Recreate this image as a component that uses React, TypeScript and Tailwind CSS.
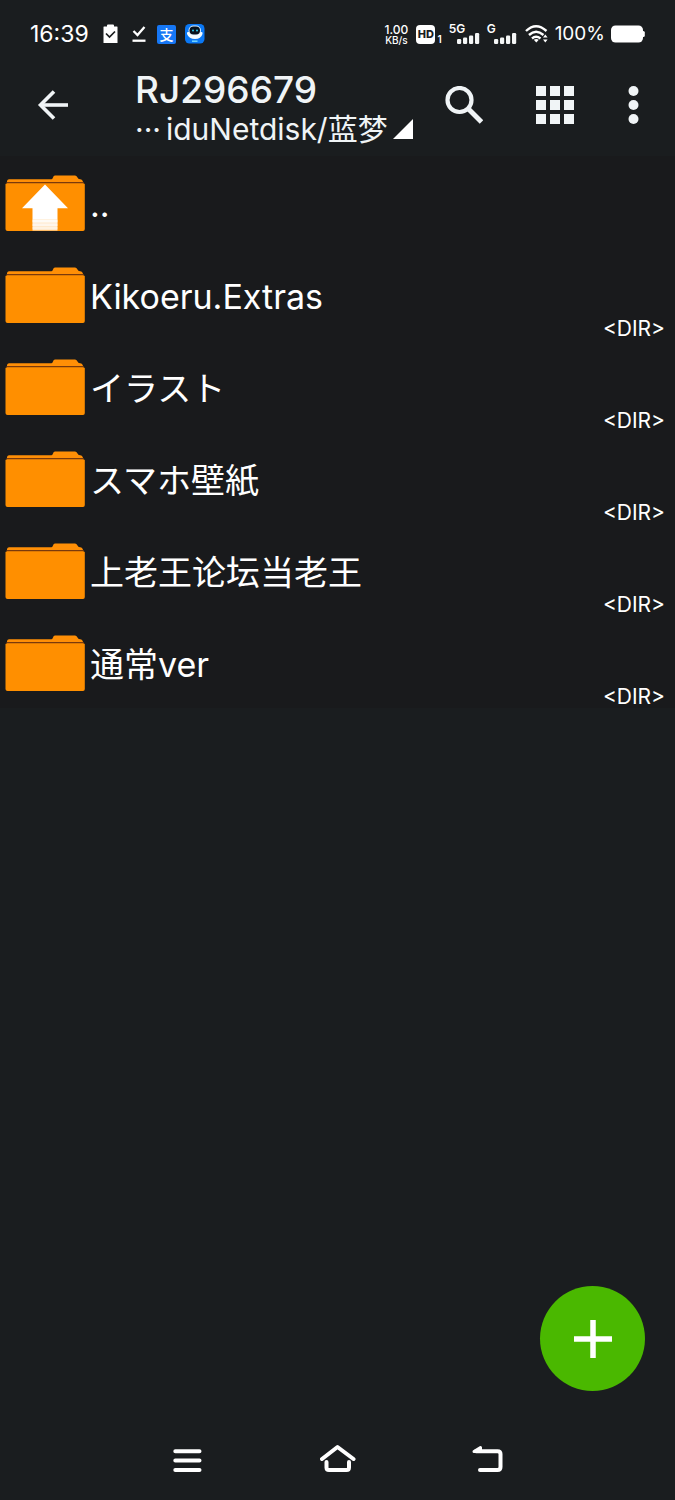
import { clsx } from "clsx";

const entries = [
  { id: "up", name: "..", up: true, lang: "en" },
  { id: "extras", name: "Kikoeru.Extras", lang: "en" },
  { id: "illust", name: "イラスト", lang: "ja" },
  { id: "wallpaper", name: "スマホ壁紙", lang: "ja" },
  { id: "forum", name: "上老王论坛当老王", lang: "zh" },
  { id: "normal", name: "通常ver", lang: "zh" },
];

function FolderIcon({ up }: { up?: boolean }) {
  return (
    <svg width="80" height="62" viewBox="0 -4 80 62" className="shrink-0">
      <path d="M2 9V6Q2.500 4.300 4 4.300H46.500Q47.500 4.300 48 2.500Q48.500 .5 50 .5H70Q71.500 .5 72.500 2.500Q73 4.300 75 4.300Q78 4.300 78.500 9Z" fill="#ff8f06" />
      <rect x="1.500" y="7" width="77" height="1.500" fill="#7a3a0c" />
      <path d="M.5 9.500Q.5 8.500 1.500 8.500H78.500Q79.800 8.500 79.800 9.500V54Q79.800 56 78 56H2.500Q.5 56 .5 54Z" fill="#ff8f00" />
      {up && (
        <g fill="#fff">
          <path d="M40 9.500L63 33.200H52.500V44H27.500V33.200H17Z" />
          <rect x="27.500" y="44" width="25" height="11.500" opacity=".8" />
          <rect x="27.500" y="44.500" width="25" height="3" opacity=".8" />
          <rect x="27.500" y="48.500" width="25" height="2.500" opacity=".6" />
          <rect x="27.500" y="52" width="25" height="2" opacity=".4" />
        </g>
      )}
    </svg>
  );
}

function SignalBars() {
  return (
    <svg width="23" height="12" viewBox="0 0 23 12" fill="#f4f6f6">
      <rect x="0" y="7" width="4.200" height="5" rx="1.200" />
      <rect x="6" y="5.500" width="4.200" height="6.500" rx="1.200" />
      <rect x="12" y="3.500" width="4.200" height="8.500" rx="1.200" />
      <rect x="18" y="1" width="4.200" height="11" rx="1.200" />
    </svg>
  );
}

function StatusBar() {
  return (
    <div className="flex h-[68px] items-center justify-between px-[30px]">
      <div className="flex items-center">
        <span className="w-[73px] text-[23px] leading-7">16:39</span>
        <svg width="15" height="20" viewBox="0 0 15 20" className="mr-[13px]">
          <path d="M1 2.500H4V1.500Q4 .5 5 .5H10Q11 .5 11 1.500V2.500H14Q14.500 2.500 14.500 3V19H.5V3Q.5 2.500 1 2.500Z" fill="#fff" />
          <path d="M3 9.500L6.500 13L12 7.500" fill="none" stroke="#1a1d1f" strokeWidth="1.700" />
        </svg>
        <svg width="15" height="20" viewBox="0 0 15 20" fill="none" stroke="#fff" strokeWidth="2.300" className="mr-[11px]">
          <path d="M2.500 7L6.500 11L13.500 3" />
          <path d="M1.500 16.700H14.500" />
        </svg>
        <span className="mr-[9px] flex size-[19px] items-center justify-center rounded-[2px] bg-[#1677f5] font-['Noto_Sans_CJK_SC',sans-serif] text-[14px] leading-none font-medium">
          支
        </span>
        <svg width="20" height="20" viewBox="0 0 20 20">
          <rect width="19.500" height="19.500" rx="4.500" fill="#0a78f5" />
          <path d="M3 8Q1.500 8 2 10Q4 15 10 15Q16 15 17.500 10Q18 8 16.500 8Z" fill="#f3fbff" />
          <rect x="3.500" y="1.500" width="12.500" height="10" rx="5" fill="#dff1ff" />
          <rect x="4.500" y="2.500" width="10.500" height="8" rx="4" fill="#06111d" />
          <circle cx="8" cy="6.500" r="1" fill="#28c7ee" />
          <circle cx="12" cy="6.500" r="1" fill="#28c7ee" />
          <path d="M7 17.200H12.500" stroke="#74d7ff" strokeWidth="1.500" />
        </svg>
      </div>

      <div className="flex items-center">
        <div className="mr-2 flex w-6 flex-col items-center font-medium">
          <span className="text-[12px] leading-[11px]">1.00</span>
          <span className="text-[10px] leading-[10px]">KB/s</span>
        </div>
        <div className="mr-[7px] flex items-end gap-[2px]">
          <span className="flex h-[19px] w-[19px] items-center justify-center rounded-[4px] bg-white text-[11px] font-extrabold text-[#1a1d1f]">
            HD
          </span>
          <span className="text-[10px] leading-[10px] font-semibold">1</span>
        </div>
        <div className="mr-[7px] grid h-5 w-[31px]">
          <span className="col-start-1 row-start-1 text-[12px] leading-[10px] font-semibold">5G</span>
          <span className="col-start-1 row-start-1 self-end justify-self-end">
            <SignalBars />
          </span>
        </div>
        <div className="mr-2 grid h-5 w-[30px]">
          <span className="col-start-1 row-start-1 text-[12px] leading-[10px] font-semibold">G</span>
          <span className="col-start-1 row-start-1 self-end justify-self-end">
            <SignalBars />
          </span>
        </div>
        <svg width="24" height="20" viewBox="0 0 24 20" fill="none" stroke="#fff" strokeWidth="2.400" className="mr-[6px]">
          <path d="M1 7Q11 -2.500 21.500 7" />
          <path d="M4 11Q11 4.500 18.500 11" />
          <path d="M7 14.500Q11 11 15.500 14.500" />
          <path d="M11.300 18.500L8.800 15.800Q11.300 14.300 13.800 15.800Z" fill="#fff" stroke="none" />
          <path d="M18 13.500L20.300 10.500L22.600 13.500ZM18 15.500H22.600L20.300 18.500Z" fill="#fff" stroke="none" />
        </svg>
        <span className="mr-[6px] text-[19px] leading-6">100%</span>
        <svg width="34" height="18" viewBox="0 0 34 18" fill="#fff">
          <rect x="0" y=".5" width="32" height="17" rx="4.500" />
          <rect x="30" y="6" width="3.800" height="6" rx="1.500" />
        </svg>
      </div>
    </div>
  );
}

function Toolbar() {
  return (
    <header className="flex h-[88px] items-start pr-[36px] pl-[37px] text-[#f0f4f6]">
      <button type="button" aria-label="Back" className="flex h-[74px] w-[98px] items-center">
        <svg width="32" height="30" viewBox="0 0 32 30" fill="none" stroke="currentColor" strokeWidth="3.600">
          <path d="M31 15H3.500" />
          <path d="M17 1.500L3.500 15L17 28.500" />
        </svg>
      </button>
      <div className="flex flex-1 flex-col pt-[2px]">
        <h1 className="text-[37px] leading-10 font-medium">RJ296679</h1>
        <button type="button" className="flex items-center gap-[5px] text-[30px] leading-[38px] whitespace-nowrap">
          <span>···</span>
          <span>iduNetdisk/蓝梦</span>
          <svg width="20" height="20" viewBox="0 0 20 20" fill="#fff">
            <path d="M20 0V20H0Z" />
          </svg>
        </button>
      </div>
      <div className="flex h-[74px] items-center gap-[53px]">
        <button type="button" aria-label="Search">
          <svg width="38" height="38" viewBox="0 0 38 38" fill="none" stroke="currentColor">
            <circle cx="14.500" cy="14" r="12" strokeWidth="4.200" />
            <path d="M23 22.500L36.500 36" strokeWidth="5" />
          </svg>
        </button>
        <button type="button" aria-label="View mode">
          <svg width="38" height="38" viewBox="0 0 38 38" fill="currentColor">
            {[0, 14, 28].map((y) => [0, 14, 28].map((x) => <rect key={`${x}-${y}`} x={x} y={y} width="10" height="10" />))}
          </svg>
        </button>
        <button type="button" aria-label="More options">
          <svg width="12" height="38" viewBox="0 0 12 38" fill="currentColor">
            <circle cx="6.500" cy="5" r="5" />
            <circle cx="6.500" cy="19" r="5" />
            <circle cx="6.500" cy="33" r="5" />
          </svg>
        </button>
      </div>
    </header>
  );
}

function NavBar() {
  return (
    <nav className="flex h-20 items-center justify-center gap-[114px]">
      <button type="button" aria-label="Recent apps">
        <svg width="36" height="32" viewBox="0 0 36 32" fill="none" stroke="#fff" strokeWidth="4" strokeLinecap="round">
          <path d="M5.300 7.200H29.500M5.300 16.600H29.500M5.300 26H29.500" />
        </svg>
      </button>
      <button type="button" aria-label="Home">
        <svg width="36" height="32" viewBox="0 0 36 32" fill="none" stroke="#fff" strokeWidth="4" strokeLinecap="round" strokeLinejoin="round">
          <path d="M2 15L17.500 3L33.500 15" />
          <path d="M6.500 18V23.500Q6.500 26 9 26H26.500Q29 26 29 23.500V18" />
        </svg>
      </button>
      <button type="button" aria-label="Back to previous app">
        <svg width="36" height="32" viewBox="0 0 36 32" fill="none" stroke="#fff" strokeWidth="4" strokeLinecap="round" strokeLinejoin="round">
          <path d="M6 7.200H27.500Q30.500 7.200 30.500 10V23Q30.500 26 27.500 26H10" />
          <path d="M4 7.500L10.500 3.500V7.500Z" strokeWidth="3" fill="#fff" />
        </svg>
      </button>
    </nav>
  );
}

export default function App() {
  return (
    <div className="flex min-h-screen flex-col bg-[#1a1d1f] font-[Inter,'Noto_Sans_CJK_SC',sans-serif] text-white">
      <StatusBar />
      <Toolbar />
      <main className="flex flex-1 flex-col">
        <ul className="bg-[#191a1c]">
          {entries.map((entry) => (
            <li key={entry.id}>
              <button type="button" className="flex h-[92px] w-full items-center gap-[5px] pr-[10px] pl-[5px] text-left">
                <FolderIcon up={entry.up} />
                <span
                  lang={entry.lang}
                  className={clsx(
                    "flex-1 pt-[5px] text-[34px] leading-10",
                    entry.lang === "ja" && "font-[Inter,'Noto_Sans_CJK_JP',sans-serif]"
                  )}
                >
                  {entry.name}
                </span>
                {!entry.up && <span className="self-end text-[21px] leading-[23px]">&lt;DIR&gt;</span>}
              </button>
            </li>
          ))}
        </ul>
        <button
          type="button"
          aria-label="Add"
          className="mt-auto mr-[30px] mb-[29px] flex size-[105px] items-center justify-center self-end rounded-full bg-[#4ab800]"
        >
          <svg width="38" height="38" viewBox="0 0 38 38" stroke="#fff" strokeWidth="5.500">
            <path d="M19 0V38M0 19H38" />
          </svg>
        </button>
      </main>
      <NavBar />
    </div>
  );
}
